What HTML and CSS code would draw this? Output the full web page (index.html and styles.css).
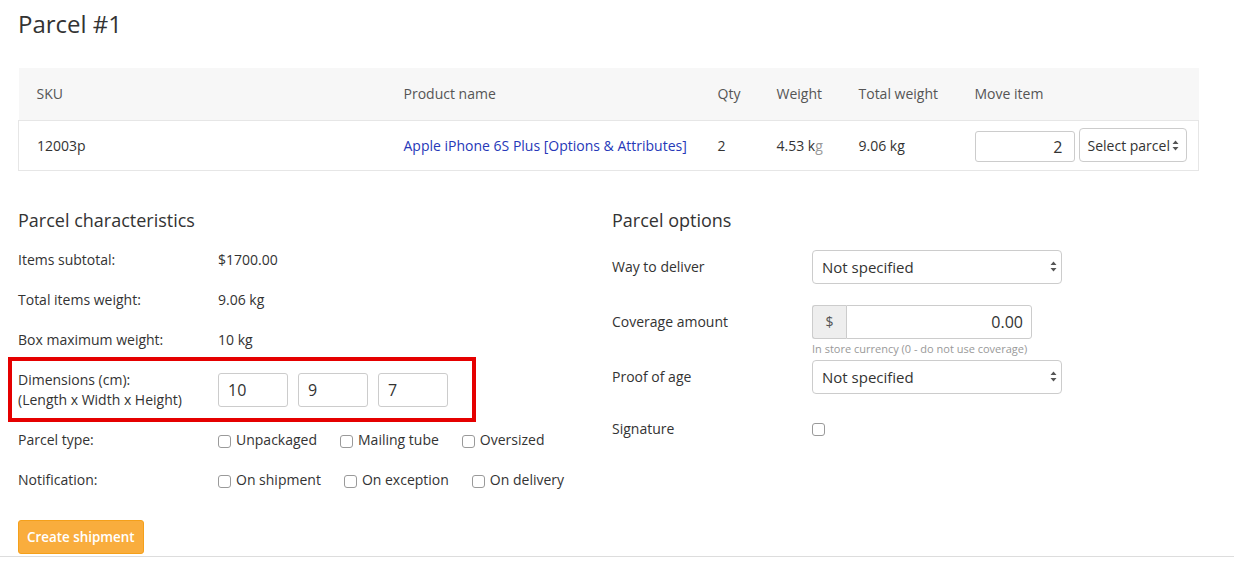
FILE: index.html
```html
<!DOCTYPE html>
<html>
<head>
<meta charset="utf-8">
<link rel="stylesheet" href="styles.css">
</head>
<body>
<div class="page">
  <h1 class="title">Parcel #1</h1>

  <table class="items">
    <colgroup>
      <col class="c-sku"><col class="c-name"><col class="c-qty"><col class="c-w"><col class="c-tw"><col class="c-move">
    </colgroup>
    <thead>
      <tr>
        <th class="first">SKU</th>
        <th>Product name</th>
        <th>Qty</th>
        <th>Weight</th>
        <th>Total weight</th>
        <th>Move item</th>
      </tr>
    </thead>
    <tbody>
      <tr>
        <td class="first">12003p</td>
        <td><a class="link" href="#">Apple iPhone 6S Plus [Options &amp; Attributes]</a></td>
        <td>2</td>
        <td>4.53 k<span class="faint">g</span></td>
        <td>9.06 kg</td>
        <td>
          <div class="move">
            <input class="qty-input" type="text" value="2">
            <div class="select small"><span>Select parcel</span><svg width="7" height="11" viewBox="0 0 7 11"><path d="M3.5 0.5 L6.5 4 L0.5 4 Z M3.5 10.5 L6.5 7 L0.5 7 Z" fill="#555"/></svg></div>
          </div>
        </td>
      </tr>
    </tbody>
  </table>

  <div class="columns">
    <section class="col">
      <h2 class="sub">Parcel characteristics</h2>
      <div class="row"><div class="lbl">Items subtotal:</div><div class="val">$1700.00</div></div>
      <div class="row"><div class="lbl">Total items weight:</div><div class="val">9.06 kg</div></div>
      <div class="row"><div class="lbl">Box maximum weight:</div><div class="val">10 kg</div></div>
      <div class="row dims">
        <div class="lbl">Dimensions (cm):<br>(Length x Width x Height)</div>
        <div class="val dim-inputs">
          <input class="dim" type="text" value="10">
          <input class="dim" type="text" value="9">
          <input class="dim" type="text" value="7">
        </div>
        <div class="highlight"></div>
      </div>
      <div class="row"><div class="lbl">Parcel type:</div>
        <div class="val checks">
          <label class="chk"><span class="box"></span>Unpackaged</label>
          <label class="chk"><span class="box"></span>Mailing tube</label>
          <label class="chk"><span class="box"></span>Oversized</label>
        </div>
      </div>
      <div class="row"><div class="lbl">Notification:</div>
        <div class="val checks">
          <label class="chk"><span class="box"></span>On shipment</label>
          <label class="chk"><span class="box"></span>On exception</label>
          <label class="chk"><span class="box"></span>On delivery</label>
        </div>
      </div>
      <button class="btn" type="button">Create shipment</button>
    </section>

    <section class="col right">
      <h2 class="sub">Parcel options</h2>
      <div class="opt r1"><div class="lbl">Way to deliver</div>
        <div class="select wide"><span>Not specified</span><svg width="7" height="11" viewBox="0 0 7 11"><path d="M3.5 0.5 L6.5 4 L0.5 4 Z M3.5 10.5 L6.5 7 L0.5 7 Z" fill="#555"/></svg></div>
      </div>
      <div class="opt r2"><div class="lbl">Coverage amount</div>
        <div class="group"><span class="addon">$</span><input class="amount" type="text" value="0.00"></div>
      </div>
      <div class="help">In store currency (0 - do not use coverage)</div>
      <div class="opt r3"><div class="lbl">Proof of age</div>
        <div class="select wide"><span>Not specified</span><svg width="7" height="11" viewBox="0 0 7 11"><path d="M3.5 0.5 L6.5 4 L0.5 4 Z M3.5 10.5 L6.5 7 L0.5 7 Z" fill="#555"/></svg></div>
      </div>
      <div class="opt r4"><div class="lbl">Signature</div>
        <div><span class="box"></span></div>
      </div>
    </section>
  </div>
</div>
<div class="footer-line"></div>
</body>
</html>
```

FILE: styles.css
```css
* { box-sizing: border-box; }
html, body { margin: 0; padding: 0; background: #fff; }
body {
  font-family: "Open Sans", "Liberation Sans", sans-serif;
  font-size: 14px;
  color: #333;
}
.page { padding: 0 36px 0 18px; }
.title {
  margin: 0;
  padding-top: 7px;
  height: 68px;
  font-size: 24px;
  font-weight: 400;
  line-height: 34px;
  color: #333;
}
.items {
  width: 1180px;
  border-collapse: collapse;
  table-layout: fixed;
}
.c-sku { width: 385px; }
.c-name { width: 314px; }
.c-qty { width: 59px; }
.c-w { width: 82px; }
.c-tw { width: 116px; }
.c-move { width: 224px; }
.items th {
  background: #f7f7f7;
  height: 52px;
  text-align: left;
  font-weight: 400;
  color: #555;
  padding: 0;
  border-bottom: 1px solid #e6e6e6;
}
.items td {
  height: 50px;
  padding: 0;
  border-bottom: 1px solid #e6e6e6;
}
.items td:first-child { border-left: 1px solid #e6e6e6; }
.items td:last-child { border-right: 1px solid #e6e6e6; }
.items .first { padding-left: 18px; }
.link { color: #2638b8; text-decoration: none; }
.faint { color: #999; }
.move { display: flex; align-items: center; gap: 4px; }
.qty-input {
  width: 100px; height: 31px;
  border: 1px solid #ccc; border-radius: 3px;
  text-align: right; padding: 0 11px 0 8px;
  font: 16px "Open Sans", sans-serif; color: #333;
  margin-top: 3px;
}
.select {
  display: flex; align-items: center; justify-content: space-between;
  border: 1px solid #ccc; border-radius: 4px;
  background: #fff; color: #333;
  height: 34px;
}
.select.small { width: 108px; padding: 0 7px 0 8px; font-size: 14px; }
.select.wide { width: 250px; padding: 0 4px 0 9px; font-size: 15px; }

.columns { display: grid; grid-template-columns: 594px 1fr; margin-top: 29px; }
.sub {
  margin: 0; height: 40px; line-height: 40px;
  font-size: 18px; font-weight: 400; color: #333;
}
.row { display: grid; grid-template-columns: 200px 1fr; align-items: center; height: 40px; position: relative; }
.row.dims { height: 60px; }
.lbl { line-height: 20px; }
.dim-inputs { display: flex; gap: 10px; }
.dim {
  width: 70px; height: 34px;
  border: 1px solid #ccc; border-radius: 3px;
  padding: 0 9px; font: 16px "Open Sans", sans-serif; color: #333;
}
.highlight {
  position: absolute; left: -10px; top: -3px;
  width: 468px; height: 65px;
  border: 4px solid #e50000;
  pointer-events: none;
}
.checks { display: flex; gap: 23px; }
.chk { display: inline-flex; align-items: center; gap: 5px; }
.box {
  display: inline-block; width: 13px; height: 13px;
  border: 1px solid #9a9a9a; border-radius: 3px; background: #fff;
  position: relative; top: 2px;
}
.btn {
  margin-top: 20px;
  height: 34px; padding: 0 8px;
  background: #f9ad3d; border: 1px solid #f5a01a; border-radius: 3px;
  color: #fff; font: 600 13.4px "Open Sans", sans-serif;
  display: block;
}
.opt { display: grid; grid-template-columns: 200px auto; align-items: center; }
.opt.r1 { margin-top: 10px; }
.opt.r2 { margin-top: 21px; }
.opt.r3 { margin-top: 3px; }
.opt.r4 { margin-top: 18px; height: 34px; }
.group { display: flex; width: 220px; height: 34px; }
.addon {
  width: 34px; display: flex; align-items: center; justify-content: center;
  background: #eee; border: 1px solid #ccc; border-right: 0;
  border-radius: 3px 0 0 3px; font-size: 14px; color: #555;
}
.amount {
  flex: 1; min-width: 0; height: 34px;
  border: 1px solid #ccc; border-radius: 0 3px 3px 0;
  text-align: right; padding: 0 8px; font: 16px "Open Sans", sans-serif; color: #333;
}
.help { margin-left: 200px; font-size: 11px; line-height: 16px; color: #999; margin-top: 2px; }
.footer-line { position: absolute; left: 0; right: 0; top: 556px; border-top: 1px solid #ddd; }
```
